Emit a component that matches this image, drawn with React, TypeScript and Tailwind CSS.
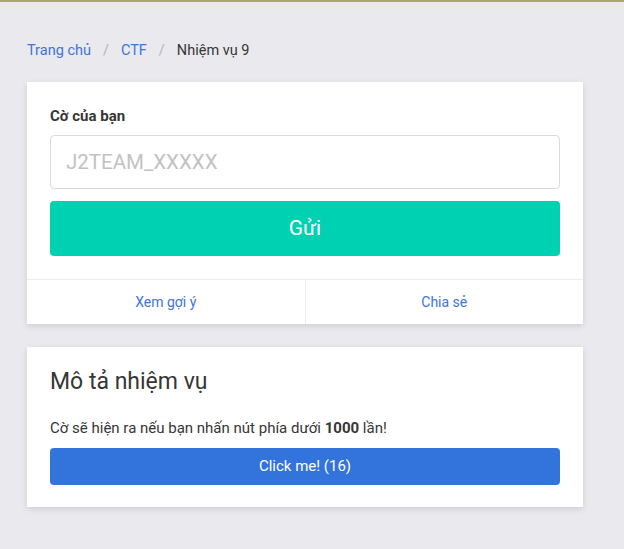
import React from "react";

export default function App() {
  return (
    <div
      className="min-h-[549px] bg-[#e9e9ee] text-[#363636]"
      style={{ fontFamily: 'Roboto, "Noto Sans", sans-serif' }}
    >
      <div className="h-[2px] bg-[#ada56e]" />
      <div className="pl-[27px] pr-[41px] pt-[38px]">
        <nav className="flex items-center text-[14.5px] leading-[22px] h-[22px]">
          <a className="text-[#3e74d8]">Trang chủ</a>
          <span className="px-[12px] text-[#b5b5b5]">/</span>
          <a className="text-[#3e74d8]">CTF</a>
          <span className="px-[12px] text-[#b5b5b5]">/</span>
          <span className="text-[#363636]">Nhiệm vụ 9</span>
        </nav>

        <div className="mt-[20px] bg-white shadow-[0_2px_6px_rgba(10,10,10,0.12)]">
          <div className="px-[23px] pt-[24px] pb-[23px]">
            <label className="block text-[15px] font-bold leading-[20px] text-[#363636]">
              Cờ của bạn
            </label>
            <input
              className="mt-[9px] block w-full h-[54px] rounded-[4px] border border-[#dbdbdb] px-[15px] text-[20.5px] placeholder:text-[#c2c2c2] outline-none"
              placeholder="J2TEAM_XXXXX"
            />
            <button className="mt-[12px] w-full h-[55px] rounded-[4px] bg-[#00d1b2] text-white text-[21px]">
              Gửi
            </button>
          </div>
          <div className="flex h-[45px] border-t border-[#ededed]">
            <a className="flex-1 flex items-center justify-center text-[14px] text-[#3e74d8] border-r border-[#ededed]">
              Xem gợi ý
            </a>
            <a className="flex-1 flex items-center justify-center text-[14px] text-[#3e74d8]">
              Chia sẻ
            </a>
          </div>
        </div>

        <div className="mt-[23px] bg-white shadow-[0_2px_6px_rgba(10,10,10,0.12)] px-[23px] pt-[20px] pb-[22px]">
          <h2 className="text-[23px] leading-[30px] font-normal text-[#363636]">Mô tả nhiệm vụ</h2>
          <p className="mt-[20px] text-[15px] leading-[22px] text-[#363636]">
            Cờ sẽ hiện ra nếu bạn nhấn nút phía dưới <strong className="font-bold">1000</strong> lần!
          </p>
          <button className="mt-[9px] w-full h-[37px] rounded-[4px] bg-[#3273dc] text-white text-[15px]">
            Click me! (16)
          </button>
        </div>
      </div>
    </div>
  );
}
